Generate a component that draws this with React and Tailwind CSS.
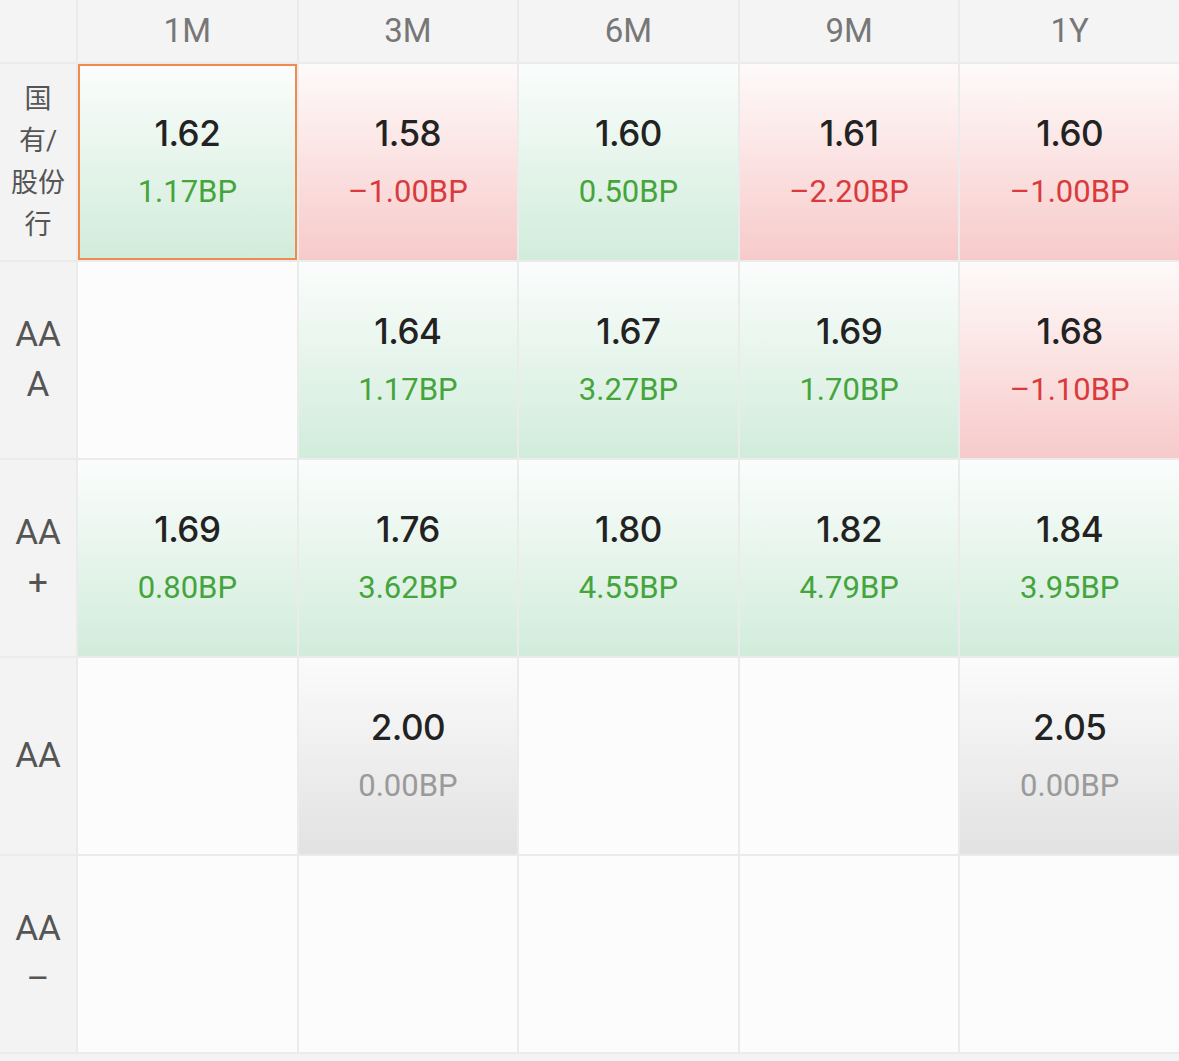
import React from 'react';

const periods = ['1M', '3M', '6M', '9M', '1Y'];

// tone: up = green, down = red, flat = gray, null = empty
const rows = [
  {
    label: ['国', '有/', '股份', '行'],
    leading: 'leading-[42px] text-[27px]',
    cells: [
      { v: '1.62', bp: '1.17BP', tone: 'up', active: true },
      { v: '1.58', bp: '–1.00BP', tone: 'down' },
      { v: '1.60', bp: '0.50BP', tone: 'up' },
      { v: '1.61', bp: '–2.20BP', tone: 'down' },
      { v: '1.60', bp: '–1.00BP', tone: 'down' },
    ],
  },
  {
    label: ['AA', 'A'],
    leading: 'leading-[50px] text-[35px]',
    cells: [
      null,
      { v: '1.64', bp: '1.17BP', tone: 'up' },
      { v: '1.67', bp: '3.27BP', tone: 'up' },
      { v: '1.69', bp: '1.70BP', tone: 'up' },
      { v: '1.68', bp: '–1.10BP', tone: 'down' },
    ],
  },
  {
    label: ['AA', '+'],
    leading: 'leading-[50px] text-[35px]',
    cells: [
      { v: '1.69', bp: '0.80BP', tone: 'up' },
      { v: '1.76', bp: '3.62BP', tone: 'up' },
      { v: '1.80', bp: '4.55BP', tone: 'up' },
      { v: '1.82', bp: '4.79BP', tone: 'up' },
      { v: '1.84', bp: '3.95BP', tone: 'up' },
    ],
  },
  {
    label: ['AA'],
    leading: 'leading-[50px] text-[35px]',
    cells: [
      null,
      { v: '2.00', bp: '0.00BP', tone: 'flat' },
      null,
      null,
      { v: '2.05', bp: '0.00BP', tone: 'flat' },
    ],
  },
  {
    label: ['AA', '–'],
    leading: 'leading-[50px] text-[35px]',
    cells: [null, null, null, null, null],
  },
];

const toneBg = {
  up: 'bg-gradient-to-b from-[#fbfdfc] to-[#d1ecdb]',
  down: 'bg-gradient-to-b from-[#fefafa] to-[#f7caca]',
  flat: 'bg-gradient-to-b from-[#fbfbfb] to-[#e2e2e2]',
};

const toneText = {
  up: 'text-[#45a43c]',
  down: 'text-[#d93b3d]',
  flat: 'text-[#9a9a9a]',
};

function Cell({ cell }) {
  if (!cell) {
    return <div className="bg-[#fcfcfc]" />;
  }
  return (
    <div
      className={`flex flex-col items-center justify-center gap-[20px] ${toneBg[cell.tone]} ${
        cell.active ? 'border-2 border-[#ef8b4f]' : ''
      }`}
    >
      <span className="font-['Inter'] text-[35px] leading-[40px] font-medium tracking-[-0.5px] text-[#222]">
        {cell.v}
      </span>
      <span className={`text-[31px] leading-[38px] ${toneText[cell.tone]}`}>{cell.bp}</span>
    </div>
  );
}

export default function App() {
  return (
    <div
      className="w-[1179px] h-[1061px] bg-[#f3f3f3] overflow-hidden"
      style={{ fontFamily: 'Roboto, "Noto Sans CJK SC", sans-serif' }}
    >
      <div className="grid grid-cols-[76px_repeat(5,1fr)] grid-rows-[62px_repeat(5,196px)] gap-[2px] bg-[#ebebeb] pb-[2px]">
        <div className="bg-[#f4f4f4]" />
        {periods.map((p) => (
          <div
            key={p}
            className="bg-[#f4f4f4] flex items-center justify-center text-[33px] text-[#777]"
          >
            {p}
          </div>
        ))}

        {rows.map((row, i) => (
          <React.Fragment key={i}>
            <div
              className={`bg-[#f3f3f3] flex flex-col items-center justify-center text-[#555] ${row.leading}`}
            >
              {row.label.map((l, j) => (
                <span key={j}>{l}</span>
              ))}
            </div>
            {row.cells.map((c, j) => (
              <Cell key={j} cell={c} />
            ))}
          </React.Fragment>
        ))}
      </div>
    </div>
  );
}
